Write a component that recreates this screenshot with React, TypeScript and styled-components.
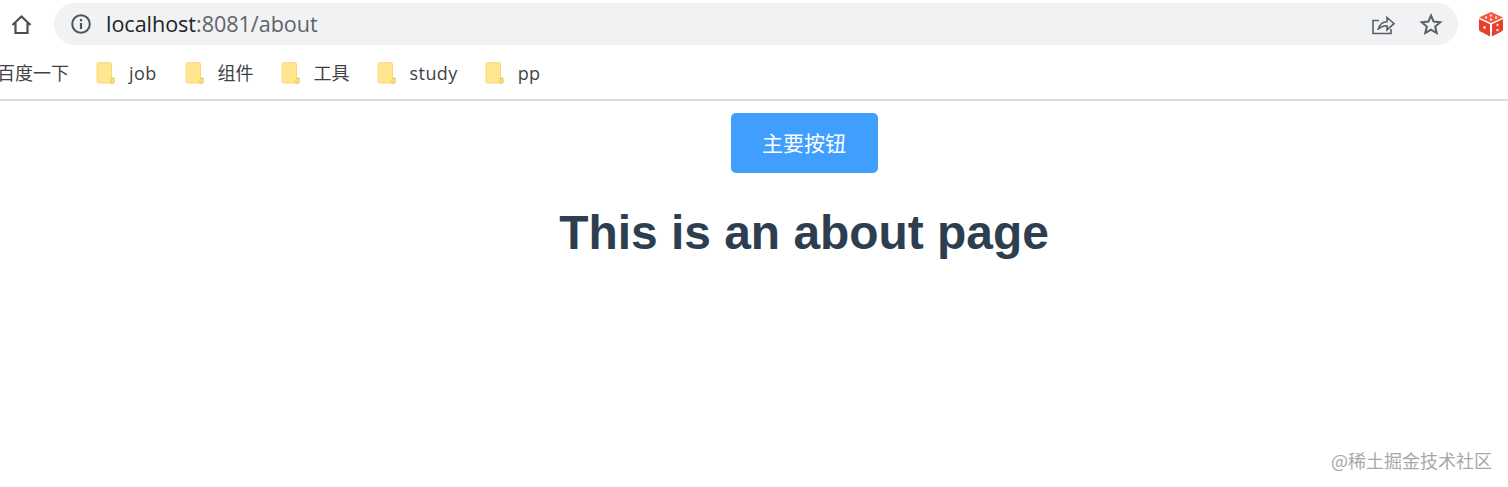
import React from "react";
import styled, { createGlobalStyle } from "styled-components";

const Global = createGlobalStyle`
  html, body { margin: 0; padding: 0; background: #fff; }
  body { font-family: "Open Sans", "Noto Sans CJK SC", sans-serif; overflow: hidden; }
`;

const Page = styled.div`
  position: relative;
  width: 1508px;
  height: 487px;
  overflow: hidden;
  background: #fff;
`;

const Chrome = styled.header`
  height: 99px;
  border-bottom: 2px solid #dadbdc;
  display: flex;
  flex-direction: column;
`;

const Toolbar = styled.div`
  height: 48px;
  display: flex;
  align-items: center;
  padding: 0 3px 0 10px;
  box-sizing: border-box;
  flex: none;
`;

const HomeButton = styled.span`
  width: 23px;
  height: 24px;
  margin-right: 21px;
  color: #4a4d51;
  display: flex;
`;

const Omnibox = styled.div`
  width: 1404px;
  height: 42px;
  border-radius: 21px;
  background: #f0f2f4;
  display: flex;
  align-items: center;
  padding: 0 14px 0 16px;
  box-sizing: border-box;
  flex: none;
`;

const InfoIcon = styled.span`
  width: 22px;
  height: 22px;
  margin-right: 14px;
  display: flex;
  color: #505458;
  flex: none;
`;

const Url = styled.div`
  font-size: 21.6px;
  line-height: 42px;
  color: #5f6368;
  flex: 1;
  letter-spacing: -0.05px;
`;

const Host = styled.span`
  color: #202428;
`;

const ActionIcon = styled.span<{ $gap: number }>`
  width: 26px;
  height: 26px;
  display: flex;
  color: #5b5f64;
  margin-left: ${(p) => p.$gap}px;
`;

const ExtensionIcon = styled.span`
  width: 28px;
  height: 28px;
  margin-left: 19px;
  display: flex;
  flex: none;
`;

const Bookmarks = styled.nav`
  height: 51px;
  padding-bottom: 2px;
  box-sizing: border-box;
  margin-left: -3px;
  display: flex;
  align-items: center;
  gap: 27px;
  font-size: 18px;
  color: #3f4245;
`;

const Bookmark = styled.span<{ $trail?: number; $spacing?: number }>`
  display: flex;
  align-items: center;
  gap: 14px;
  line-height: 24px;
  letter-spacing: ${(p) => p.$spacing ?? 0}px;
  margin-right: ${(p) => p.$trail ?? 0}px;
`;

const FolderIcon = styled.svg`
  width: 19px;
  height: 22px;
  flex: none;
`;

const Main = styled.main`
  padding: 12px 0 0 100px;
  display: flex;
  flex-direction: column;
  align-items: center;
`;

const PrimaryButton = styled.button`
  width: 147px;
  height: 60px;
  border: 0;
  border-radius: 5px;
  background: #409eff;
  color: #fff;
  font-family: "Noto Sans CJK SC", sans-serif;
  font-size: 21px;
  padding: 0 0 2px;
`;

const Title = styled.h1`
  margin: 30px 0 0;
  font-family: "Liberation Sans", Arial, sans-serif;
  font-weight: 700;
  font-size: 47.9px;
  line-height: 60px;
  color: #2c3e50;
`;

const Watermark = styled.div`
  position: absolute;
  right: 16px;
  bottom: 15px;
  font-family: "Noto Sans CJK SC", sans-serif;
  font-size: 18px;
  line-height: 24px;
  color: #a8a8a8;
`;

const Folder = () => (
  <FolderIcon viewBox="0 0 19 22">
    <path
      d="M1 2.2A1.5 1.5 0 0 1 2.5 .7h11.5A1.5 1.5 0 0 1 15.5 2.2V16H18v3.5a1.5 1.5 0 0 1-1.5 1.5H2.5A1.5 1.5 0 0 1 1 19.5Z"
      fill="#ffe68f"
      stroke="#f7d873"
      strokeWidth="1"
    />
    <path d="M15 16.5h3V21h-3z" fill="#ffe68f" stroke="#eec544" strokeWidth="1" />
  </FolderIcon>
);

const items = [
  { label: "job", spacing: 0.4, trail: 1 },
  { label: "组件", spacing: 0, trail: 0 },
  { label: "工具", spacing: 0, trail: 0 },
  { label: "study", spacing: 0.4, trail: 0 },
  { label: "pp", spacing: 0.4, trail: 0 },
];

export default function App() {
  return (
    <Page>
      <Global />
      <Chrome>
        <Toolbar>
          <HomeButton>
            <svg width="23" height="24" viewBox="0 0 23 24" fill="none" stroke="currentColor" strokeWidth="2.2" strokeLinejoin="miter">
              <path d="M2.5 13 11.5 4.5 20.5 13" />
              <path d="M5.5 11v10h12V11" />
            </svg>
          </HomeButton>
          <Omnibox>
            <InfoIcon>
              <svg width="22" height="22" viewBox="0 0 22 22" fill="none" stroke="currentColor">
                <circle cx="11" cy="11" r="8.8" strokeWidth="2" />
                <path d="M11 10v6" strokeWidth="2.2" />
                <path d="M11 6v2.4" strokeWidth="2.2" />
              </svg>
            </InfoIcon>
            <Url>
              <Host>localhost</Host>:8081/about
            </Url>
            <ActionIcon $gap={0}>
              <svg width="26" height="26" viewBox="0 0 26 26" fill="none" stroke="currentColor" strokeWidth="1.6" strokeLinejoin="miter">
                <path d="M9 9.5H3v13h18V18" />
                <path d="M8 19c.6-5 4.6-8.3 9-8.3V6.5l7 6.2-7 6.2v-4.2c-3.5 0-6.8 1.3-9 3.8Z" />
              </svg>
            </ActionIcon>
            <ActionIcon $gap={22}>
              <svg width="26" height="26" viewBox="0 0 26 26" fill="none" stroke="currentColor" strokeWidth="2" strokeLinejoin="miter">
                <path d="M13 4.5 15.6 10.6 22.2 11.2 17.2 15.5 18.7 22 13 18.6 7.3 22 8.8 15.5 3.8 11.2 10.4 10.6Z" />
              </svg>
            </ActionIcon>
          </Omnibox>
          <ExtensionIcon>
            <svg width="28" height="28" viewBox="0 0 28 28">
              <path d="M14 2 26 7.5 14 13 2 7.5Z" fill="#f4553f" />
              <path d="M2 9 13 14.2V26.5L3.5 21.5A2 2 0 0 1 2 19.5Z" fill="#ea3f2c" />
              <path d="M26 9 15 14.2V26.5L24.5 21.5A2 2 0 0 0 26 19.5Z" fill="#e8402e" />
              <g fill="#ffd9cf">
                <circle cx="9" cy="7.5" r="1.2" />
                <circle cx="14" cy="5.5" r="1.2" />
                <circle cx="14" cy="9.5" r="1.2" />
                <circle cx="19" cy="7.5" r="1.2" />
                <circle cx="7.5" cy="17.5" r="1.4" />
                <circle cx="20.5" cy="15" r="1.2" />
                <circle cx="20.5" cy="20" r="1.2" />
              </g>
            </svg>
          </ExtensionIcon>
        </Toolbar>
        <Bookmarks>
          <Bookmark>百度一下</Bookmark>
          {items.map((item) => (
            <Bookmark key={item.label} $trail={item.trail} $spacing={item.spacing}>
              <Folder />
              {item.label}
            </Bookmark>
          ))}
        </Bookmarks>
      </Chrome>
      <Main>
        <PrimaryButton>主要按钮</PrimaryButton>
        <Title>This is an about page</Title>
      </Main>
      <Watermark>@稀土掘金技术社区</Watermark>
    </Page>
  );
}
